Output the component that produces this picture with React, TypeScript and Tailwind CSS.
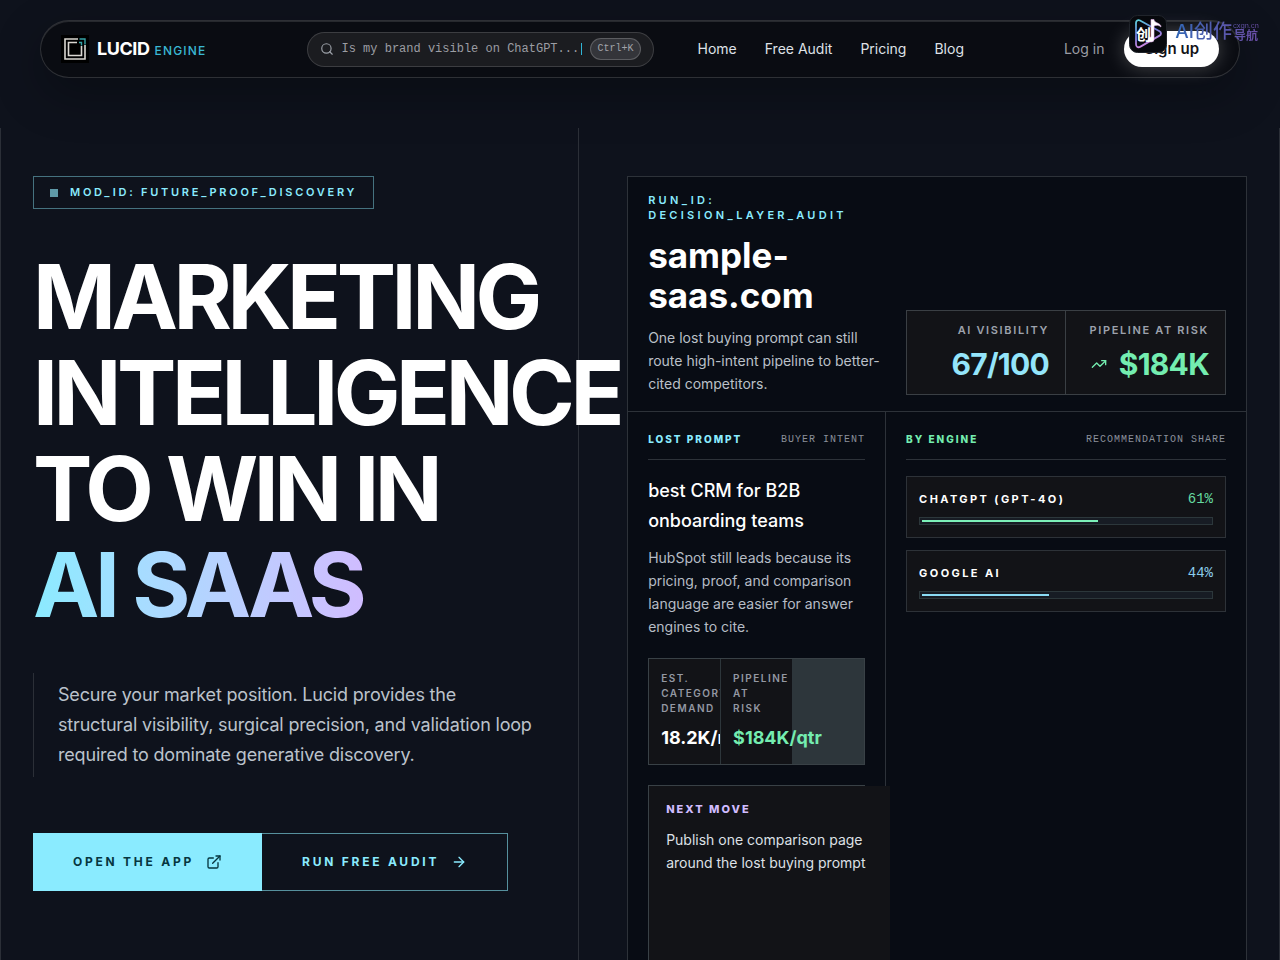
import { ArrowRight, ExternalLink, Search, TrendingUp } from 'lucide-react';

const navLinks = ['Home', 'Free Audit', 'Pricing', 'Blog'];

const engines = [
  { name: 'ChatGPT (GPT-4o)', share: 61, text: 'text-[#65d9a0]', bar: 'bg-[#7cf0b8]' },
  { name: 'Google AI', share: 44, text: 'text-[#8bcdec]', bar: 'bg-[#8adcf5]' },
];

function LogoMark() {
  return (
    <svg viewBox="0 0 28 28" className="size-7" fill="none" aria-hidden="true">
      <rect width="28" height="28" fill="#000" />
      <path d="M17 4H4v20h20V10" stroke="#d9d6d0" strokeWidth="1.6" />
      <path d="M16 7.500H7.500v13h13V11" stroke="#d9d6d0" strokeWidth="1.600" />
      <path d="M18.500 4H24v5.500M18 7.500h2.500v3" stroke="#36a3a6" strokeWidth="1.400" />
    </svg>
  );
}

function SiteBadge() {
  return (
    <div className="pointer-events-none absolute top-[15px] right-[21px] z-10 flex items-start gap-2">
      <svg viewBox="0 0 38 38" className="size-[38px]" fill="none" aria-hidden="true">
        <defs>
          <linearGradient id="play" x1="0" y1="0" x2="0.3" y2="1">
            <stop offset="0" stopColor="#5fd4dc" />
            <stop offset="0.5" stopColor="#6a78d8" />
            <stop offset="1" stopColor="#d48ae0" />
          </linearGradient>
        </defs>
        <rect x="0.5" y="0.5" width="37" height="37" rx="8" fill="#07090d" stroke="#20242b" />
        <path
          d="M11 5.5c-2-1-4 0-4 2.500v21c0 3 2 4 4.500 2.600l19-11c2-1.200 2-3.200 0-4.400Z"
          stroke="url(#play)"
          strokeWidth="1.800"
        />
        <path
          d="M22 4.500h3c0 4 7 3 7 7.500-2-2-5-2-7-1v13.500a3 2.500 0 1 1-3-2.500Z"
          fill="#fff"
          stroke="#e8b6ef"
          strokeWidth="0.6"
        />
        <text x="7" y="25" fill="#fff" fontSize="15" fontWeight="700" fontFamily="'Noto Sans CJK SC', sans-serif">
          创
        </text>
      </svg>
      <div className="flex items-center gap-px bg-linear-to-r from-[#2f66b5] to-[#6b4da6] bg-clip-text pt-[5px] font-['Inter','Noto_Sans_CJK_SC',sans-serif] text-transparent">
        <span className="text-[19px] leading-6 font-medium">AI创作</span>
        <span className="flex flex-col items-center">
          <span className="text-[7px] leading-2">cxgn.cn</span>
          <span className="text-[12px] leading-3 font-bold">导航</span>
        </span>
      </div>
    </div>
  );
}

function Header() {
  return (
    <header className="relative px-10 pt-5 pb-[50px]">
      <div className="flex h-[58px] items-center justify-between rounded-full border border-white/15 bg-[#0a0c12] px-5 shadow-[inset_0_1px_0_rgba(255,255,255,0.12),0_16px_48px_rgba(0,0,0,0.3)]">
        <a href="#" className="flex items-center gap-2">
          <LogoMark />
          <span className="flex items-baseline gap-[5px]">
            <span className="text-lg font-bold tracking-tight text-white">LUCID</span>
            <span className="text-xs font-medium tracking-widest text-[#3ab8d4]">ENGINE</span>
          </span>
        </a>

        <div className="flex items-center gap-11">
          <button
            type="button"
            className="flex h-[35px] w-[347px] items-center rounded-full border border-white/15 bg-[#1b1c20] px-3 font-['Liberation_Mono',monospace]"
          >
            <Search className="size-[14px] shrink-0 text-[#9ca0a8]" />
            <span className="ml-2 text-xs text-[#9b9da3]">Is my brand visible on ChatGPT...</span>
            <span className="ml-[2px] h-3 w-px bg-[#2fb5d6]" />
            <kbd className="ml-auto rounded-full border border-white/20 bg-[#34353a] px-[6px] py-[2px] font-['Liberation_Mono',monospace] text-[10px] leading-4 text-[#a2a4aa]">
              Ctrl+K
            </kbd>
          </button>
          <nav className="flex gap-7 text-sm text-[#dfe1e7]">
            {navLinks.map((link) => (
              <a key={link} href="#">
                {link}
              </a>
            ))}
          </nav>
        </div>

        <div className="flex items-center gap-5 text-sm">
          <a href="#" className="text-[#9a9ca4]">
            Log in
          </a>
          <a
            href="#"
            className="flex h-9 items-center rounded-full bg-white px-5 text-[15px] font-semibold text-[#121317] shadow-[0_0_20px_rgba(255,255,255,0.25)]"
          >
            Sign up
          </a>
        </div>
      </div>
      <SiteBadge />
    </header>
  );
}

function Hero() {
  return (
    <section className="relative border-r border-[#2b2f37] pt-12 pr-10 pb-16 pl-8">
      <div className="inline-flex h-[33px] items-center gap-3 border border-[#45727f] px-4">
        <span className="size-2 bg-[#5f99a8]" />
        <span className="text-[11px] font-semibold tracking-[0.25em] whitespace-nowrap text-[#8aebff]">
          MOD_ID: FUTURE_PROOF_DISCOVERY
        </span>
      </div>

      <h1 className="relative z-10 mt-10 text-[89px] leading-[96px] font-bold tracking-tighter text-white">
        <span className="block">MARKETING</span>
        <span className="block">INTELLIGENCE</span>
        <span className="block whitespace-nowrap">TO WIN IN</span>
        <span className="inline-block bg-linear-to-r from-[#8aebff] to-[#d0bcff] bg-clip-text pr-1 whitespace-nowrap text-transparent">
          AI SAAS
        </span>
      </h1>

      <p className="mt-10 border-l border-[#2b2f37] py-[7px] pl-6 text-lg leading-[30px] tracking-[-0.01em] text-[#bbc2cb]">
        Secure your market position. Lucid provides the structural visibility, surgical precision, and
        validation loop required to dominate generative discovery.
      </p>

      <div className="mt-14 flex text-xs font-bold tracking-[0.23em] whitespace-nowrap">
        <a href="#" className="flex h-[58px] items-center gap-3 bg-[#8aebff] px-10 text-[#06363f]">
          OPEN THE APP
          <ExternalLink className="size-4" />
        </a>
        <a
          href="#"
          className="flex h-[58px] items-center gap-3 border border-l-0 border-[#56909d] px-10 text-[#8aebff]"
        >
          RUN FREE AUDIT
          <ArrowRight className="size-4" />
        </a>
      </div>
    </section>
  );
}

function AuditHeader() {
  return (
    <div className="grid grid-cols-[minmax(0,1fr)_320px] items-end gap-6 border-b border-[#2d3239] px-5 py-4">
      <div>
        <p className="text-[11px] leading-[15px] font-semibold tracking-[0.3em] text-[#8aebff]">
          RUN_ID: DECISION_LAYER_AUDIT
        </p>
        <h2 className="mt-3 text-[35px] leading-10 font-bold text-white">sample-saas.com</h2>
        <p className="mt-[11px] text-sm leading-[23px] text-[#bbc0c8]">
          One lost buying prompt can still route high-intent pipeline to better-cited competitors.
        </p>
      </div>
      <dl className="grid grid-cols-2 border border-[#3a3f44] bg-[#121317] text-right">
        <div className="border-r border-[#3a3f44] px-4 py-3">
          <dt className="text-[11px] leading-[15px] font-semibold tracking-[0.15em] text-[#9da2ad]">
            AI VISIBILITY
          </dt>
          <dd className="mt-2 text-[30px] leading-9 font-bold tracking-tight text-[#94e5fb]">67/100</dd>
        </div>
        <div className="px-4 py-3">
          <dt className="text-[11px] leading-[15px] font-semibold tracking-[0.15em] whitespace-nowrap text-[#9da2ad]">
            PIPELINE AT RISK
          </dt>
          <dd className="mt-2 flex items-center justify-end gap-3 text-[30px] leading-9 font-bold tracking-tight text-[#74edb0]">
            <TrendingUp className="size-4" />
            $184K
          </dd>
        </div>
      </dl>
    </div>
  );
}

function LostPrompt() {
  return (
    <div className="flex flex-col border-r border-[#2d3239] px-5 pt-5">
      <div className="flex items-center justify-between border-b border-[#2d3239] pb-3 leading-[15px]">
        <h3 className="text-[10px] font-extrabold tracking-[2px] text-[#8aebff]">LOST PROMPT</h3>
        <span className="font-['Liberation_Mono',monospace] text-[10px] tracking-[1px] text-[#8b909b]">
          BUYER INTENT
        </span>
      </div>
      <p className="mt-4 text-lg leading-[30px] font-medium text-white">best CRM for B2B onboarding teams</p>
      <p className="mt-[10px] text-sm leading-[23px] text-[#b6bcc5]">
        HubSpot still leads because its pricing, proof, and comparison language are easier for answer
        engines to cite.
      </p>

      <dl className="mt-5 grid grid-cols-3 gap-px border border-[#394146] bg-[#2d363b]">
        <div className="min-w-0 overflow-hidden bg-[#121317] p-3">
          <dt className="text-[10px] leading-[15px] font-semibold tracking-[0.15em] text-[#9498a3]">
            EST. CATEGORY DEMAND
          </dt>
          <dd className="mt-2 text-lg leading-7 font-bold text-white">18.2K/mo</dd>
        </div>
        <div className="min-w-0 bg-[#121317] p-3">
          <dt className="text-[10px] leading-[15px] font-semibold tracking-[0.15em] text-[#9498a3]">
            PIPELINE
            <br />
            AT
            <br />
            RISK
          </dt>
          <dd className="mt-2 text-lg leading-7 font-bold text-[#74edb0]">$184K/qtr</dd>
        </div>
      </dl>

      <div className="mt-5 flex grow border-t border-l border-[#394146]">
        <div className="relative w-[241px] shrink-0 bg-[#121317] py-4 pr-6 pl-[17px]">
          <h3 className="text-[11px] leading-[15px] font-extrabold tracking-[2px] text-[#d0bcff]">NEXT MOVE</h3>
          <p className="mt-[11px] text-sm leading-[23px] whitespace-nowrap text-[#dde0e6]">
            Publish one comparison page
            <br />
            around the lost buying prompt
          </p>
        </div>
      </div>
    </div>
  );
}

function ByEngine() {
  return (
    <div className="px-5 pt-5">
      <div className="mb-4 flex items-center justify-between border-b border-[#2d3239] pb-3 leading-[15px]">
        <h3 className="text-[10px] font-extrabold tracking-[2px] text-[#74edb0]">BY ENGINE</h3>
        <span className="font-['Liberation_Mono',monospace] text-[10px] tracking-[1px] text-[#8b909b]">
          RECOMMENDATION SHARE
        </span>
      </div>
      <ul className="flex flex-col gap-3">
        {engines.map((engine) => (
          <li key={engine.name} className="border border-[#2d3238] bg-[#121317] p-3">
            <div className="flex items-center justify-between leading-5">
              <span className="text-[11px] font-bold tracking-[0.22em] text-white uppercase">{engine.name}</span>
              <span className={`font-['Liberation_Mono',monospace] text-sm leading-5 ${engine.text}`}>
                {engine.share}%
              </span>
            </div>
            <div className="mt-2 h-2 border border-[#2c373b] bg-[#171c24] p-[2px]">
              <div className={`h-[2px] ${engine.bar}`} style={{ width: `${engine.share}%` }} />
            </div>
          </li>
        ))}
      </ul>
    </div>
  );
}

export default function App() {
  return (
    <div className="flex min-h-screen flex-col overflow-x-hidden bg-[#0e121c] font-['Inter',sans-serif]">
      <Header />
      <main className="grid grow grid-cols-[minmax(0,95fr)_minmax(0,115fr)] border-x border-[#2b2f37]">
        <Hero />
        <section className="flex pt-12 pr-8 pl-12">
          <div className="flex grow flex-col border border-b-0 border-[#2d3239] bg-[#080c14]">
            <AuditHeader />
            <div className="grid grow grid-cols-[minmax(0,43fr)_minmax(0,60fr)]">
              <LostPrompt />
              <ByEngine />
            </div>
          </div>
        </section>
      </main>
    </div>
  );
}
